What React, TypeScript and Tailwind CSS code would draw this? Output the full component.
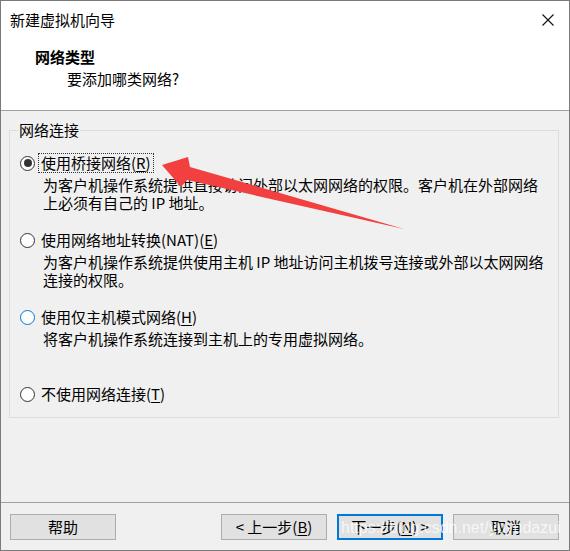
import React from "react";

type Opt = {
  pre: string;
  key: string;
  desc: string[];
  checked?: boolean;
  focus?: boolean;
  hover?: boolean;
};

const options: Opt[] = [
  {
    pre: "使用桥接网络(",
    key: "R",
    desc: [
      "为客户机操作系统提供直接访问外部以太网网络的权限。客户机在外部网络",
      "上必须有自己的 IP 地址。",
    ],
    checked: true,
    focus: true,
  },
  {
    pre: "使用网络地址转换(NAT)(",
    key: "E",
    desc: [
      "为客户机操作系统提供使用主机 IP 地址访问主机拨号连接或外部以太网网络",
      "连接的权限。",
    ],
  },
  {
    pre: "使用仅主机模式网络(",
    key: "H",
    desc: ["将客户机操作系统连接到主机上的专用虚拟网络。"],
    hover: true,
  },
  {
    pre: "不使用网络连接(",
    key: "T",
    desc: [],
  },
];

function Radio({ checked, hover }: { checked?: boolean; hover?: boolean }) {
  return (
    <span
      className={
        "flex h-[15px] w-[15px] shrink-0 items-center justify-center rounded-full border bg-white " +
        (hover ? "border-[#0078d7]" : "border-[#333333]")
      }
    >
      {checked && <span className="h-[8px] w-[8px] rounded-full bg-[#333333]" />}
    </span>
  );
}

function Btn({ children, primary }: { children: React.ReactNode; primary?: boolean }) {
  return (
    <div
      className={
        "flex h-[26px] w-[106px] items-center justify-center bg-[#e1e1e1] leading-[18px] " +
        (primary ? "border-2 border-[#0078d7]" : "border border-[#adadad]")
      }
    >
      {children}
    </div>
  );
}

export default function App() {
  return (
    <div className="relative flex h-[551px] w-[570px] flex-col overflow-hidden border border-[#7a7a7a] bg-[#f0f0f0] font-['Noto_Sans_CJK_SC','Noto_Sans',sans-serif] text-[15px] text-black">
      {/* Header */}
      <div className="h-[110px] shrink-0 border-b border-[#a0a0a0] bg-white">
        <div className="flex items-center justify-between pl-[9px] pr-[15px] pt-[10px]">
          <span className="leading-[18px]">新建虚拟机向导</span>
          <svg width="12" height="12" viewBox="0 0 12 12" className="mt-[-1px]">
            <path d="M0.5 0.5 L11.5 11.5 M11.5 0.5 L0.5 11.5" stroke="#111" strokeWidth="1.1" fill="none" />
          </svg>
        </div>
        <div className="mt-[19px] pl-[34px] font-bold leading-[18px]">网络类型</div>
        <div className="mt-[4px] pl-[66px] leading-[18px]">要添加哪类网络?</div>
      </div>

      {/* Body */}
      <div className="flex-1 pl-[8px] pr-[10px] pt-[19px]">
        <div className="relative border border-[#dcdcdc] pb-[13px] pl-[10px] pt-[22px]">
          <span className="absolute -top-[10px] left-[8px] bg-[#f0f0f0] px-[1px] leading-[18px]">
            网络连接
          </span>
          <div className="flex flex-col gap-[18px]">
            {options.map((o, i) => (
              <div key={i} className="flex flex-col">
                <div className="flex h-[20px] items-center gap-[3px]">
                  <Radio checked={o.checked} hover={o.hover} />
                  <span
                    className={
                      "whitespace-nowrap border px-[2px] leading-[18px] " +
                      (o.focus ? "border-dotted border-[#333333]" : "border-transparent")
                    }
                  >
                    {o.pre}
                    <span className="underline underline-offset-2">{o.key}</span>)
                  </span>
                </div>
                {i < options.length - 1 && (
                  <div className="mt-[3px] h-[36px] pl-[23px] leading-[18px]">
                    {o.desc.map((d, j) => (
                      <div key={j} className="whitespace-nowrap">
                        {d}
                      </div>
                    ))}
                  </div>
                )}
              </div>
            ))}
          </div>
        </div>
      </div>

      {/* Footer */}
      <div className="flex h-[48px] shrink-0 items-start justify-between border-t border-[#a0a0a0] pl-[9px] pr-[10px] pt-[11px]">
        <Btn>帮助</Btn>
        <div className="flex gap-[10px]">
          <Btn>
            &lt; 上一步(<span className="underline underline-offset-2">B</span>)
          </Btn>
          <Btn primary>
            下一步(<span className="underline underline-offset-2">N</span>) &gt;
          </Btn>
          <Btn>取消</Btn>
        </div>
      </div>

      {/* Watermark */}
      <span className="pointer-events-none absolute left-[340px] top-[517px] font-['Liberation_Sans',sans-serif] text-[16px] leading-[20px] text-white/75">
        https://blog.csdn.net/yuyudazui
      </span>

      {/* Red annotation arrow */}
      <svg
        className="pointer-events-none absolute left-[-1px] top-[-1px]"
        width="570"
        height="551"
        viewBox="0 0 570 551"
      >
        <polygon
          points="162,165 188,157 190,167 404,229 187,180 181,187"
          fill="#f23f3f"
        />
      </svg>
    </div>
  );
}
